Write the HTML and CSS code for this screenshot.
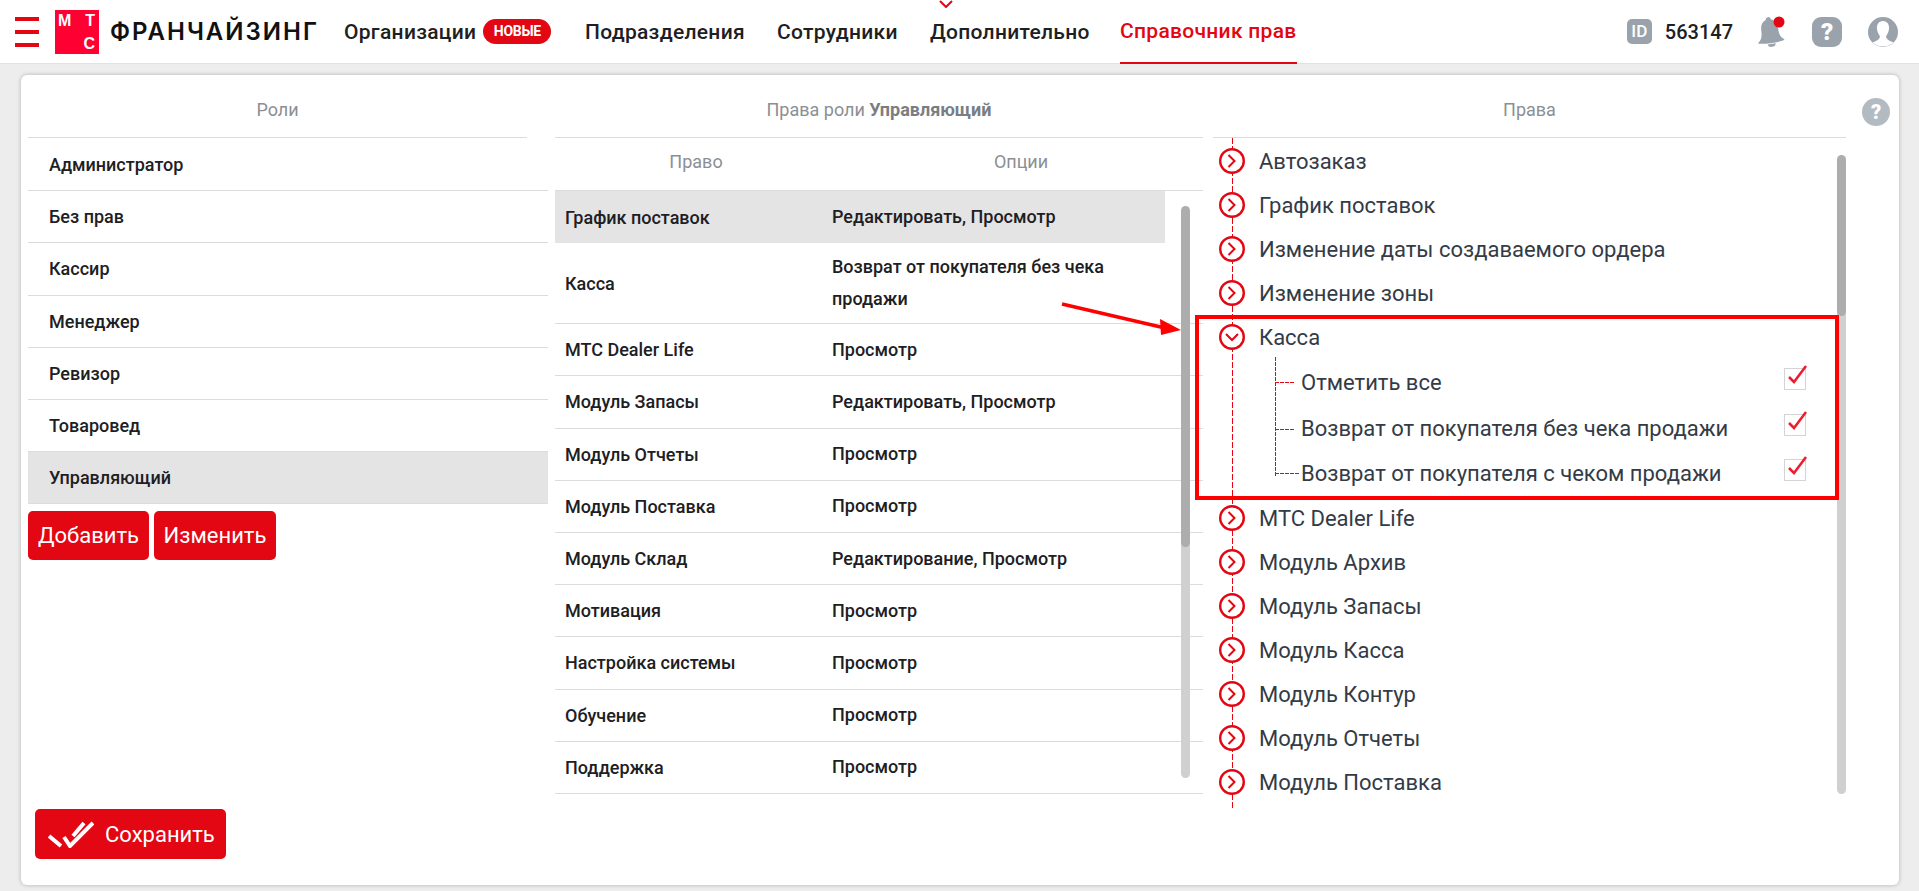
FILE: index.html
```html
<!DOCTYPE html>
<html lang="ru">
<head>
  <meta charset="UTF-8" />
  <meta name="viewport" content="width=device-width, initial-scale=1.0"/>
  <title>Справочник прав</title>
  <link rel="stylesheet" href="styles.css">
</head>
<body>
  <svg class="defs" width="0" height="0">
    <symbol id="closed" viewBox="0 0 26 26">
      <circle cx="13" cy="13" r="11.8" fill="#fff" stroke="#e30613" stroke-width="2.4"/>
      <path d="M9.5 7 L15.5 13 L9.5 19" fill="none" stroke="#e30613" stroke-width="2"/>
    </symbol>
    <symbol id="opened" viewBox="0 0 26 26">
      <circle cx="13" cy="13" r="11.8" fill="#fff" stroke="#e30613" stroke-width="2.4"/>
      <path d="M7 10 L13 16 L19 10" fill="none" stroke="#e30613" stroke-width="2"/>
    </symbol>
    <symbol id="tick" viewBox="0 0 24 26">
      <path d="M5 13 L10 18 L22 2" fill="none" stroke="#ee1c2e" stroke-width="2.5"/>
    </symbol>
  </svg>

  <header class="topbar">
    <button class="burger"><span></span><span></span><span></span></button>
    <div class="logo">
      <span>М</span><span>Т</span><span></span><span>С</span>
    </div>
    <div class="brand">ФРАНЧАЙЗИНГ</div>
    <nav class="nav">
      <a class="nav-org">Организации<b class="badge">НОВЫЕ</b></a>
      <a class="nav-sub">Подразделения</a>
      <a class="nav-staff">Сотрудники</a>
      <a class="nav-more">
        <svg class="more-arrow" width="14" height="8" viewBox="0 0 14 8"><path d="M1 1 L7 7 L13 1" fill="none" stroke="#e30613" stroke-width="2"/></svg>
        Дополнительно
      </a>
      <a class="active">Справочник прав</a>
    </nav>
    <div class="user">
      <span class="id-icon">ID</span>
      <span class="user-id">563147</span>
      <svg class="bell" width="30" height="32" viewBox="0 0 30 32">
        <g transform="rotate(-8 15 16)">
          <path d="M15 1 C16.500 1 17.500 2 17.500 3.500 C22 5 23.500 9 23.500 14 C23.500 20 25 23 28 25 L28 26 C21 27.500 9 27.500 2 26 L2 25 C5 23 6.500 20 6.500 14 C6.500 9 8 5 12.500 3.500 C12.500 2 13.500 1 15 1 Z M11 28 L19 28 C19 30 17 31 15 31 C13 31 11 30 11 28 Z" fill="#9aa3ac"/>
        </g>
        <circle cx="24" cy="6" r="5.5" fill="#e30613"/>
      </svg>
      <span class="help-square">?</span>
      <svg class="avatar" width="30" height="30" viewBox="0 0 30 30">
        <circle cx="15" cy="15" r="15" fill="#9aa3ac"/>
        <path d="M15 4 C19.500 4 21.500 8 21 12 C20.700 15 19 18 18 19.500 C18.500 22.500 21 24 25.500 25.500 C22.800 28 19 29.500 15 29.500 C11 29.500 7.200 28 4.500 25.500 C9 24 11.500 22.500 12 19.500 C11 18 9.300 15 9 12 C8.500 8 10.500 4 15 4 Z" fill="#fff"/>
      </svg>
    </div>
  </header>

  <main class="card">
    <section class="roles">
      <div class="col-title roles-title">Роли</div>
      <div class="role">Администратор</div>
      <div class="role">Без прав</div>
      <div class="role">Кассир</div>
      <div class="role">Менеджер</div>
      <div class="role">Ревизор</div>
      <div class="role">Товаровед</div>
      <div class="role selected">Управляющий</div>
      <div class="role-btns">
        <button class="red-btn btn-add">Добавить</button>
        <button class="red-btn btn-edit">Изменить</button>
      </div>
      <button class="red-btn save-btn">
        <svg width="46" height="28" viewBox="0 0 46 28"><path d="M1 16 L13 26 M16 17 L22 26 L45 3 M25 16 L36 3" fill="none" stroke="#fff" stroke-width="4"/></svg>
        Сохранить
      </button>
    </section>

    <section class="rights">
      <div class="col-title">Права роли <b>Управляющий</b></div>
      <div class="rights-head">
        <span>Право</span>
        <span>Опции</span>
      </div>
      <div class="rights-body">
        <div class="scroll mid-scroll"><i></i></div>
        <div class="right-row selected"><span>График поставок</span><span>Редактировать, Просмотр</span></div>
        <div class="right-row tall"><span>Касса</span><span>Возврат от покупателя без чека продажи</span></div>
        <div class="right-row"><span>МТС Dealer Life</span><span>Просмотр</span></div>
        <div class="right-row"><span>Модуль Запасы</span><span>Редактировать, Просмотр</span></div>
        <div class="right-row"><span>Модуль Отчеты</span><span>Просмотр</span></div>
        <div class="right-row"><span>Модуль Поставка</span><span>Просмотр</span></div>
        <div class="right-row"><span>Модуль Склад</span><span>Редактирование, Просмотр</span></div>
        <div class="right-row"><span>Мотивация</span><span>Просмотр</span></div>
        <div class="right-row"><span>Настройка системы</span><span>Просмотр</span></div>
        <div class="right-row"><span>Обучение</span><span>Просмотр</span></div>
        <div class="right-row"><span>Поддержка</span><span>Просмотр</span></div>
      </div>
    </section>

    <section class="tree-col">
      <div class="col-title">Права</div>
      <div class="tree">
        <div class="scroll tree-scroll"><i></i></div>
        <div class="tree-item"><svg><use href="#closed"/></svg>Автозаказ</div>
        <div class="tree-item"><svg><use href="#closed"/></svg>График поставок</div>
        <div class="tree-item"><svg><use href="#closed"/></svg>Изменение даты создаваемого ордера</div>
        <div class="tree-item"><svg><use href="#closed"/></svg>Изменение зоны</div>
        <div class="tree-item"><svg><use href="#opened"/></svg>Касса</div>
        <div class="subtree">
          <div class="sub-item"><span>Отметить все</span><b class="check"><svg><use href="#tick"/></svg></b></div>
          <div class="sub-item"><span>Возврат от покупателя без чека продажи</span><b class="check"><svg><use href="#tick"/></svg></b></div>
          <div class="sub-item"><span>Возврат от покупателя с чеком продажи</span><b class="check"><svg><use href="#tick"/></svg></b></div>
        </div>
        <div class="tree-item"><svg><use href="#closed"/></svg>МТС Dealer Life</div>
        <div class="tree-item"><svg><use href="#closed"/></svg>Модуль Архив</div>
        <div class="tree-item"><svg><use href="#closed"/></svg>Модуль Запасы</div>
        <div class="tree-item"><svg><use href="#closed"/></svg>Модуль Касса</div>
        <div class="tree-item"><svg><use href="#closed"/></svg>Модуль Контур</div>
        <div class="tree-item"><svg><use href="#closed"/></svg>Модуль Отчеты</div>
        <div class="tree-item"><svg><use href="#closed"/></svg>Модуль Поставка</div>
      </div>
    </section>

    <span class="help-round">?</span>
  </main>

  <!-- annotation drawn over the screen -->
  <div class="note-box"></div>
  <svg class="note-arrow" width="124" height="34" viewBox="0 0 124 34">
    <path d="M1 2 L104 26" stroke="#f00" stroke-width="3.500"/>
    <path d="M120 28 L99 17 L100 33 Z" fill="#f00"/>
  </svg>
</body>
</html>
```

FILE: styles.css
```css
* {
  box-sizing: border-box;
}
html, body {
  height: 100%;
}
body {
  margin: 0;
  background-color: #ededed;
  font-family: Roboto, "Liberation Sans", sans-serif;
  color: #1d2023;
  overflow: hidden;
}
.defs {
  position: absolute;
}

/* top bar */
.topbar {
  display: flex;
  align-items: center;
  height: 64px;
  background-color: #fff;
  border-bottom: 1px solid #e2e2e2;
}
.burger {
  display: flex;
  flex-direction: column;
  gap: 9px;
  width: 24px;
  margin: 0 16px 0 15px;
  padding: 0;
  border: none;
  background: none;
}
.burger span {
  height: 4px;
  background-color: #e30613;
}
.logo {
  display: grid;
  grid-template-columns: 1fr 1fr;
  grid-template-rows: 1fr 1fr;
  width: 44px;
  height: 44px;
  padding: 3px 4px 2px 3px;
  background-color: #ff0032;
  color: #fff;
  font: bold 16px/16px "Liberation Sans", sans-serif;
}
.logo span:nth-child(even) {
  text-align: right;
}
.logo span:nth-child(4) {
  align-self: end;
}
.brand {
  width: 234px;
  margin-left: 11px;
  font: 600 24px Inter, sans-serif;
  letter-spacing: 2px;
  white-space: nowrap;
  color: #111;
}
.nav {
  display: flex;
  height: 63px;
  font-size: 21px;
  font-weight: 500;
  letter-spacing: 0.3px;
  color: #1d2023;
}
.nav a {
  position: relative;
  display: flex;
  align-items: center;
  height: 100%;
}
.nav-org {
  width: 241px;
}
.nav-sub {
  width: 192px;
}
.nav-staff {
  width: 153px;
}
.nav-more {
  width: 190px;
}
.nav a.active {
  color: #e30613;
  border-bottom: 2px solid #e30613;
  height: 64px;
}
.badge {
  display: inline-block;
  margin-left: 7px;
  width: 68px;
  height: 25px;
  border-radius: 13px;
  background-color: #e30613;
  color: #fff;
  font-size: 14px;
  line-height: 25px;
  text-align: center;
  letter-spacing: -0.3px;
}
.more-arrow {
  position: absolute;
  left: 9px;
  top: 0;
}
.user {
  display: flex;
  align-items: center;
  margin-left: auto;
}
.id-icon {
  width: 25px;
  height: 25px;
  border-radius: 5px;
  background-color: #9aa3ac;
  color: #fff;
  font-size: 17px;
  font-weight: 500;
  line-height: 25px;
  text-align: center;
}
.user-id {
  margin-left: 13px;
  font-size: 20px;
  font-weight: 500;
}
.bell {
  margin-left: 22px;
}
.help-square {
  width: 30px;
  height: 30px;
  margin-left: 27px;
  border-radius: 9px;
  background-color: #9aa3ac;
  color: #fff;
  font-size: 24px;
  font-weight: 900;
  line-height: 30px;
  text-align: center;
}
.avatar {
  margin: 0 21px 0 26px;
}

/* main card */
.card {
  position: relative;
  display: flex;
  width: 1878px;
  height: 810px;
  margin: 11px 0 0 21px;
  padding-left: 7px;
  background-color: #fff;
  border-radius: 6px;
  box-shadow: 0 0 4px rgba(0, 0, 0, 0.25);
}
.col-title {
  height: 63px;
  padding-top: 24px;
  border-bottom: 1px solid #dcdcdc;
  color: #8b8f94;
  font-size: 18px;
  line-height: 21px;
  text-align: center;
}
.col-title b {
  font-weight: 700;
  color: #7a7e83;
}

/* roles */
.roles {
  display: flex;
  flex-direction: column;
  width: 520px;
}
.roles-title {
  flex: none;
  width: 499px;
  margin-bottom: 1px;
}
.role {
  display: flex;
  align-items: center;
  flex: none;
  height: 52.2px;
  padding-left: 21px;
  border-bottom: 1px solid #dcdcdc;
  font-size: 18px;
  font-weight: 500;
}
.selected {
  background-color: #e4e4e4;
}
.role-btns {
  display: flex;
  gap: 5px;
  margin-top: 7px;
}
.red-btn {
  border: none;
  border-radius: 5px;
  background-color: #e30613;
  color: #fff;
  font-family: Roboto, sans-serif;
  font-size: 22px;
  padding: 0;
}
.btn-add {
  width: 121px;
  height: 49px;
}
.btn-edit {
  width: 122px;
  height: 49px;
}
.save-btn {
  display: flex;
  align-items: center;
  gap: 11px;
  width: 191px;
  height: 50px;
  margin: auto 0 26px 7px;
  padding-left: 13px;
}

/* rights of role */
.rights {
  width: 648px;
  margin-left: 7px;
}
.rights-head {
  display: flex;
  height: 53px;
  border-bottom: 1px solid #dcdcdc;
  color: #8b8f94;
  font-size: 18px;
  line-height: 48px;
  text-align: center;
}
.rights-head span:first-child {
  width: 282px;
}
.rights-head span:last-child {
  width: 366px;
  padding-left: 2px;
}
.rights-body {
  position: relative;
}
.right-row {
  display: flex;
  align-items: center;
  width: 610px;
  height: 52.2px;
  font-size: 18px;
  font-weight: 500;
}
.right-row + .right-row {
  width: 648px;
  border-bottom: 1px solid #dcdcdc;
}
.right-row span:first-child {
  width: 277px;
  padding-left: 10px;
}
.right-row span:last-child {
  width: 290px;
  line-height: 32px;
}
.right-row.tall {
  height: 81px;
}

/* scrollbars */
.scroll {
  position: absolute;
  width: 9px;
  border-radius: 5px;
  background-color: #d0d0d0;
  overflow: hidden;
}
.scroll i {
  display: block;
  background-color: #adadad;
  border-radius: 5px;
}
.mid-scroll {
  top: 15px;
  left: 626px;
  height: 572px;
}
.mid-scroll i {
  height: 341px;
}
.tree-scroll {
  top: 17px;
  right: 0;
  height: 639px;
}
.tree-scroll i {
  height: 161px;
}

/* tree */
.tree-col {
  width: 633px;
  margin-left: 10px;
}
.tree {
  position: relative;
  padding-top: 1px;
}
.tree::before {
  content: "";
  position: absolute;
  left: 19px;
  top: 0;
  width: 1px;
  height: 670px;
  background: repeating-linear-gradient(#e30613 0 6px, transparent 6px 8px);
}
.tree-item {
  position: relative;
  display: flex;
  align-items: center;
  gap: 14px;
  height: 44px;
  padding-left: 6px;
  color: #333b47;
  font-size: 22px;
}
.tree-item svg {
  width: 26px;
  height: 26px;
}
.subtree {
  position: relative;
  height: 137px;
}
.subtree::before {
  content: "";
  position: absolute;
  left: 62px;
  top: -2px;
  width: 1px;
  height: 119px;
  background: repeating-linear-gradient(#e30613 0 4px, transparent 4px 5px);
}
.sub-item {
  position: relative;
  display: flex;
  align-items: center;
  justify-content: space-between;
  height: 46px;
  margin-right: 40px;
  padding-left: 88px;
  color: #333b47;
  font-size: 22px;
}
.sub-item:nth-child(2) {
  height: 47px;
}
.sub-item:nth-child(3) {
  height: 42px;
}
.sub-item::before {
  content: "";
  position: absolute;
  left: 62px;
  top: 50%;
  width: 20px;
  height: 1px;
  background: repeating-linear-gradient(90deg, #e30613 0 4px, transparent 4px 5px);
}
.sub-item:nth-child(3)::before {
  width: 24px;
}
.check {
  position: relative;
  width: 22px;
  height: 22px;
  border: 1px solid #d4d4d4;
  margin-top: -7px;
}
.check svg {
  position: absolute;
  left: -1px;
  top: -5px;
  width: 24px;
  height: 26px;
}
.help-round {
  position: absolute;
  top: 23px;
  left: 1841px;
  width: 28px;
  height: 28px;
  border-radius: 50%;
  background-color: #b3bbc2;
  color: #fff;
  font-size: 20px;
  font-weight: 900;
  line-height: 28px;
  text-align: center;
}

/* annotation */
.note-box {
  position: absolute;
  left: 1195px;
  top: 315px;
  width: 644px;
  height: 185px;
  border: 4px solid #f00;
}
.note-arrow {
  position: absolute;
  left: 1061px;
  top: 302px;
}
```
